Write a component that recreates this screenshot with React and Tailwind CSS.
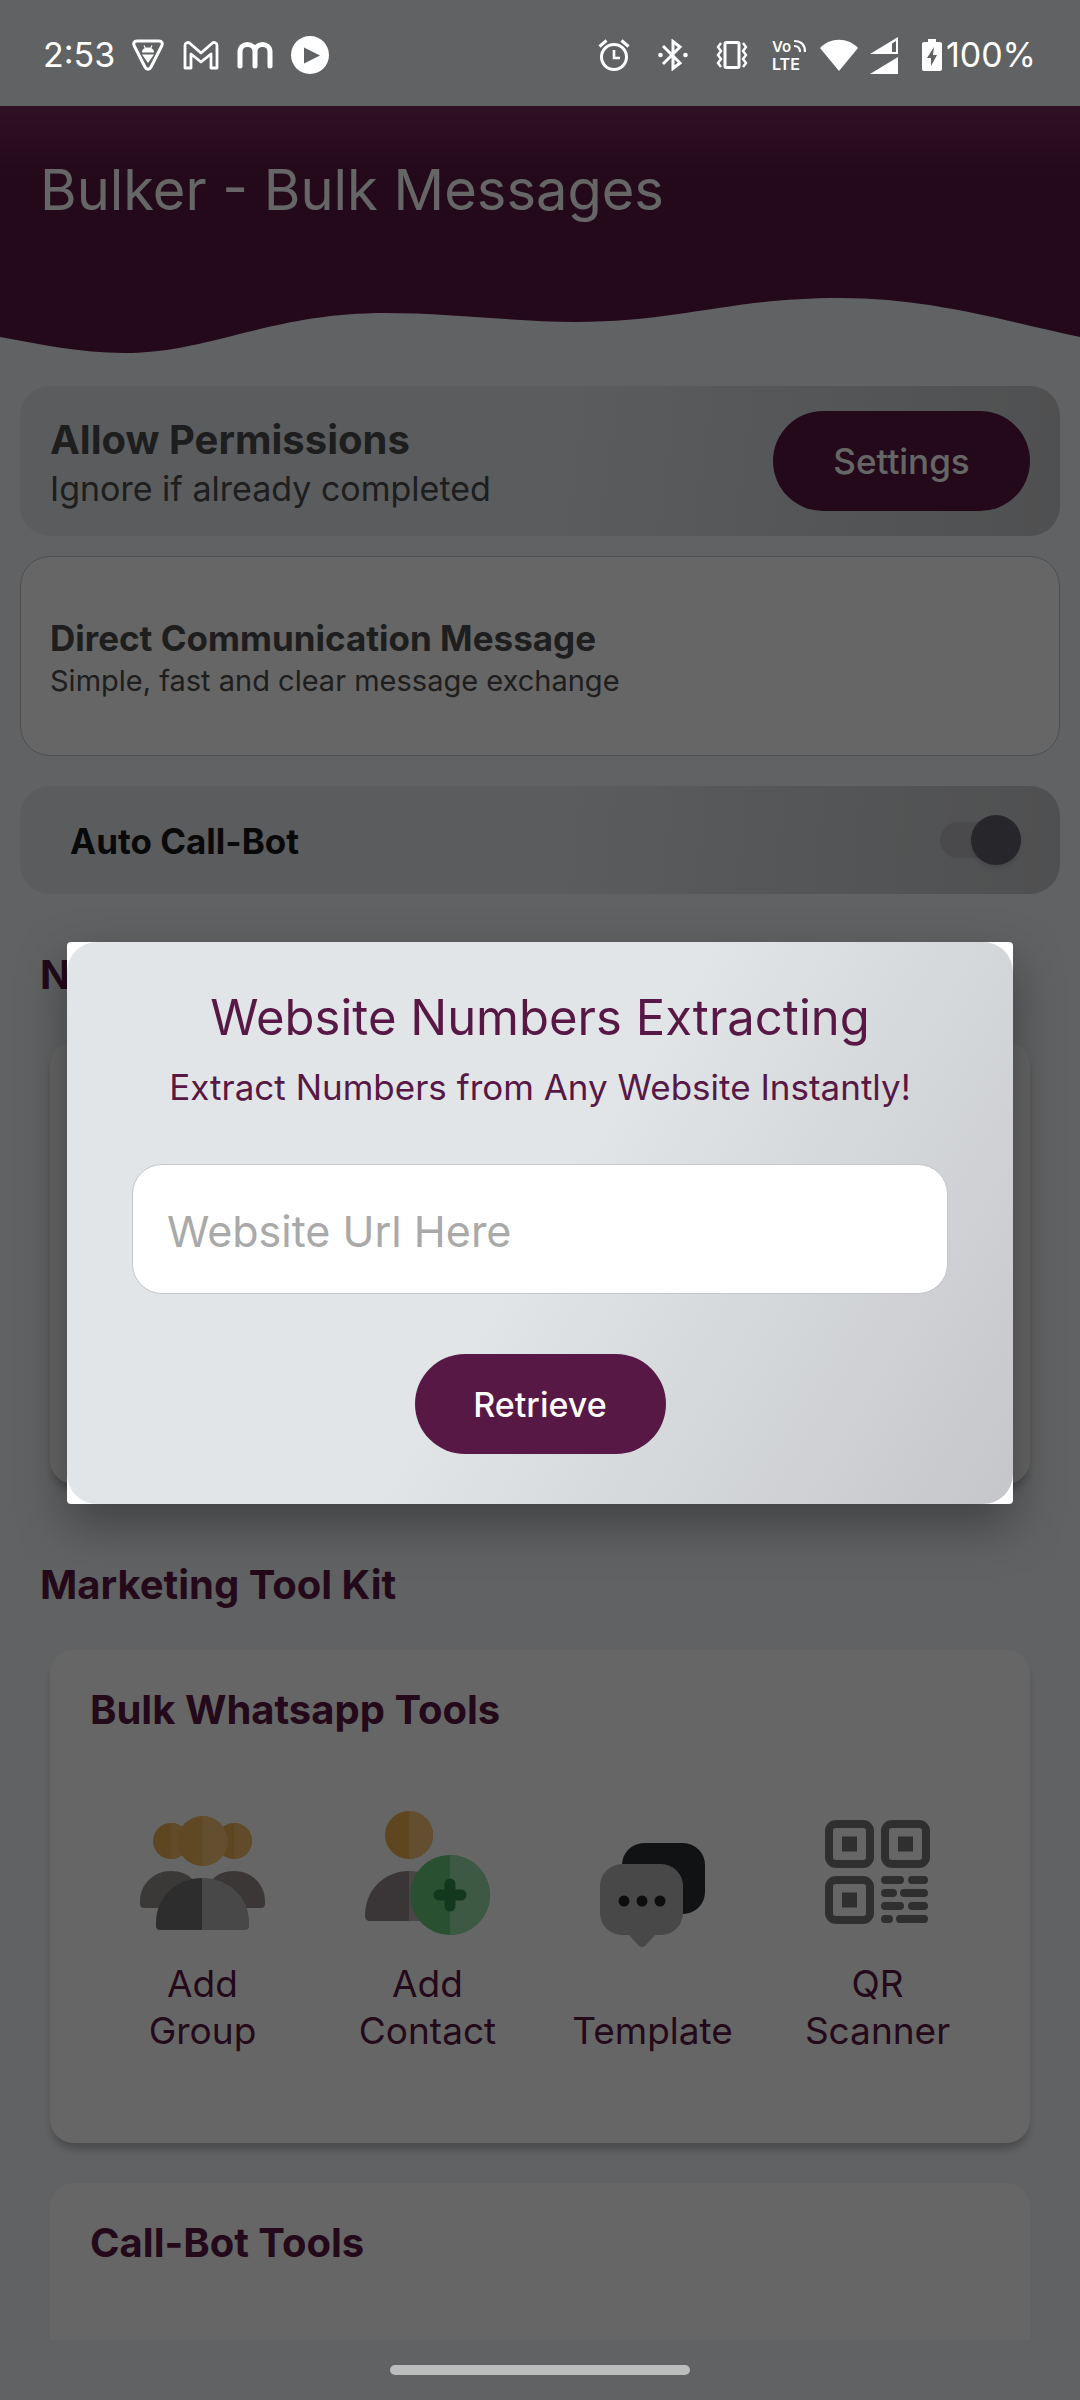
import React, { useState } from 'react';

const DebugIcon = () => (
  <svg width="34" height="34" viewBox="0 0 34 34" fill="none">
    <path d="M6 3h22c3 0 4 2.500 2.800 4.800L20 29c-1.500 3-4.500 3-6 0L3.200 7.800C2 5.500 3 3 6 3z" stroke="#fff" strokeWidth="3" strokeLinejoin="round" />
    <path d="M11 14.500c0-3.500 2.500-5 6-5s6 1.500 6 5zM11 16.500h12l-6 8.500z" fill="#fff" />
    <path d="M13 7.500l1.500 3M21 7.500l-1.500 3" stroke="#fff" strokeWidth="1.200" />
  </svg>
);

const MailIcon = () => (
  <svg width="36" height="29" viewBox="0 0 36 29" fill="none" stroke="#fff" strokeWidth="2.800" strokeLinejoin="round">
    <path d="M2 4.500C2 1.500 5 1 6.500 2L18 12 29.500 2C31 1 34 1.500 34 4.500V27h-6V13l-10 8L8 13v14H2z" />
  </svg>
);

const MIcon = () => (
  <svg width="36" height="28" viewBox="0 0 36 28" fill="none" stroke="#fff" strokeWidth="5" strokeLinecap="round">
    <path d="M3 25V11c0-10 15-10 15 0v14M18 11c0-10 15-10 15 0v14" />
  </svg>
);

const PlayIcon = () => (
  <svg width="38" height="38" viewBox="0 0 38 38">
    <circle cx="19" cy="19" r="19" fill="#fff" />
    <path d="M13 11.500v16L29 19.500z" fill="#616264" />
  </svg>
);

const AlarmIcon = () => (
  <svg width="32" height="32" viewBox="0 0 32 32" fill="none" stroke="#fff" strokeWidth="3">
    <circle cx="16" cy="18" r="12.500" />
    <path d="M16 11v8h6" strokeWidth="2.600" />
    <path d="M1.500 7.500l7-6M30.500 7.500l-7-6" />
  </svg>
);

const BluetoothIcon = () => (
  <svg width="30" height="32" viewBox="0 0 30 32" fill="none" stroke="#fff" strokeWidth="3">
    <path d="M5 7l17 17-7 5.500V2.500L22 8 5 25" />
    <circle cx="2.500" cy="16" r="2.300" fill="#fff" stroke="none" />
    <circle cx="27.500" cy="16" r="2.300" fill="#fff" stroke="none" />
  </svg>
);

const VibrateIcon = () => (
  <svg width="32" height="28" viewBox="0 0 32 28" fill="none" stroke="#fff" strokeWidth="3">
    <rect x="9" y="1.500" width="14" height="25" rx="1.500" />
    <path d="M5 2L2 6l3 4-3 4 3 4-3 4 3 4M27 2l3 4-3 4 3 4-3 4 3 4-3 4" strokeWidth="2.400" />
  </svg>
);

const VolteIcon = () => (
  <svg width="36" height="44" viewBox="0 -6 36 44" fill="#fff" fontFamily="Inter, sans-serif" fontWeight="600">
    <text x="0" y="13" fontSize="15">Vo</text>
    <text x="0" y="31" fontSize="16">LTE</text>
    <path d="M22 2c7 0 11 4 11 11M22 7c4 0 6 2 6 6" fill="none" stroke="#fff" strokeWidth="2.200" />
  </svg>
);

const WifiIcon = () => (
  <svg width="38" height="32" viewBox="0 0 38 32">
    <path d="M0 9C10-2 28-2 38 9L19 32z" fill="#fff" />
  </svg>
);

const SignalIcon = () => (
  <svg width="28" height="37" viewBox="0 0 28 37" fill="#fff">
    <path fillRule="evenodd" d="M0 17L28 0v17zM22 6.500v8.500h4V4z" />
    <path d="M0 37l28-17v17z" />
  </svg>
);

const BatteryIcon = () => (
  <svg width="20" height="32" viewBox="0 0 20 32">
    <path d="M6 0h8v3h4c1.200 0 2 .8 2 2v25c0 1.200-.8 2-2 2H2c-1.200 0-2-.8-2-2V5c0-1.200.8-2 2-2h4z" fill="#fff" />
    <path d="M12 8L5 19h4v8l6-11h-4z" fill="#616264" />
  </svg>
);

const GroupIcon = () => (
  <svg width="125" height="125" viewBox="0 0 125 125">
    <circle cx="31" cy="31" r="18" fill="#eeb056" />
    <path d="M31 13a18 18 0 0 1 0 36z" fill="#f6bc6c" />
    <circle cx="94" cy="31" r="18" fill="#eeb056" />
    <path d="M94 13a18 18 0 0 1 0 36z" fill="#f6bc6c" />
    <path d="M31 61c18 0 31 13 31 32v5H4c-2.500 0-4-1.500-4-4v-3c0-17 14-30 31-30z" fill="#938d8d" />
    <path d="M94 61c-18 0-31 13-31 32v5h58c2.500 0 4-1.500 4-4v-3c0-17-14-30-31-30z" fill="#938a8a" />
    <circle cx="62.500" cy="31" r="25" fill="#f0b45c" />
    <path d="M62.500 6a25 25 0 0 1 0 50z" fill="#fac478" />
    <path d="M62.500 68v52H20c-2.500 0-4-1.500-4-4v-4c0-25 21-44 46.500-44z" fill="#727272" />
    <path d="M62.500 68v52H105c2.500 0 4-1.500 4-4v-4c0-25-21-44-46.500-44z" fill="#b4b4b4" />
  </svg>
);

const ContactIcon = () => (
  <svg width="125" height="125" viewBox="0 0 125 125">
    <circle cx="44" cy="25" r="24" fill="#f0b050" />
    <path d="M44 1a24 24 0 0 1 0 48z" fill="#fac478" />
    <path d="M44 61v50H5c-3 0-5-2-5-5 0-26 19-45 44-45z" fill="#918889" />
    <path d="M44 61c14 0 26 6 34 15v35H44z" fill="#b8b0b1" />
    <circle cx="85" cy="85" r="40" fill="#64c87c" />
    <path d="M85 45a40 40 0 0 1 0 80z" fill="#98dca8" />
    <path d="M85 74v22M74 85h22" stroke="#348c4a" strokeWidth="11" strokeLinecap="round" />
  </svg>
);

const TemplateIcon = () => (
  <svg width="105" height="105" viewBox="0 0 105 105">
    <rect x="22" y="0" width="83" height="71" rx="22" fill="#2a2e30" />
    <path d="M22 21h39a22 22 0 0 1 22 22v27a22 22 0 0 1-22 22h-6L45 103q-3 2-6 0L29 92h-7A22 22 0 0 1 0 70V43a22 22 0 0 1 22-22z" fill="#b4b4b4" />
    <circle cx="24" cy="58" r="5.500" fill="#222" />
    <circle cx="42" cy="58" r="5.500" fill="#222" />
    <circle cx="60" cy="58" r="5.500" fill="#222" />
  </svg>
);

const QrIcon = () => (
  <svg width="105" height="105" viewBox="0 0 105 105" fill="none" stroke="#767676" strokeWidth="8">
    <rect x="4" y="4" width="41" height="40" rx="7" />
    <rect x="60" y="4" width="41" height="40" rx="7" />
    <rect x="4" y="60" width="41" height="40" rx="7" />
    <path d="M17 24h15M73 24h15M17 80h15" strokeWidth="15" />
    <path d="M60 60h15M87 60h12M60 73h8M79 73h20M60 86h15M87 86h12M60 99h4M75 99h24" strokeLinecap="round" />
  </svg>
);

const tools = [
  { label: ['Add', 'Group'], Icon: GroupIcon },
  { label: ['Add', 'Contact'], Icon: ContactIcon },
  { label: ['Template'], Icon: TemplateIcon },
  { label: ['QR', 'Scanner'], Icon: QrIcon },
];

const StatusBar = () => (
  <div className="relative z-20 flex h-[106px] items-center justify-between pl-[43px] pr-[44px] pt-1 text-[34px] leading-10 text-white">
    <div className="flex items-center">
      <span className="mr-4">2:53</span>
      <span className="flex items-center gap-[18px]">
        <DebugIcon />
        <MailIcon />
        <MIcon />
        <PlayIcon />
      </span>
    </div>
    <div className="flex items-center">
      <span className="mr-3 flex items-center gap-[28px]">
        <AlarmIcon />
        <BluetoothIcon />
        <VibrateIcon />
      </span>
      <span className="mr-6 ml-3 flex items-center gap-3">
        <VolteIcon />
        <WifiIcon />
        <SignalIcon />
      </span>
      <BatteryIcon />
      <span className="ml-1">100%</span>
    </div>
  </div>
);

const Header = () => (
  <header>
    <div className="h-[192px] bg-[#581842] bg-linear-to-b from-[#772a59] to-[#581842] to-[72px] px-[40px] pt-[48px]">
      <h1 className="text-[56px] leading-[72px] text-white">Bulker - Bulk Messages</h1>
    </div>
    <svg className="block h-[55px] w-full" viewBox="0 0 1080 55" preserveAspectRatio="none">
      <path d="M0 39C40 46 80 55 124 55C210 55 270 15 385 15C450 15 520 24 575 24C680 24 730 0 840 0C930 0 1000 22 1080 39V0H0z" fill="#581842" />
    </svg>
  </header>
);

const App = () => {
  const [autoCall, setAutoCall] = useState(true);
  const [url, setUrl] = useState('');

  return (
    <div className="relative flex h-screen flex-col overflow-hidden bg-[#f3f5f8] font-['Inter',sans-serif]">
      <StatusBar />

      <main className="flex min-h-0 flex-1 flex-col overflow-hidden">
        <Header />

        <section className="mx-5 mt-[33px] flex h-[150px] shrink-0 items-center justify-between rounded-[30px] bg-linear-[98deg] from-[#e4e7ea] via-[#e4e7ea] to-[#c5c7c9] px-[30px]">
          <div className="pt-1.5 text-[#4b4b4d]">
            <h2 className="text-[40px] font-bold leading-[50px]">Allow Permissions</h2>
            <p className="text-[34px] leading-[48px]">Ignore if already completed</p>
          </div>
          <button className="h-[100px] w-[257px] rounded-full bg-[#581842] text-[35px] font-medium text-white">Settings</button>
        </section>

        <section className="mx-5 mt-5 flex h-[200px] shrink-0 flex-col justify-center rounded-[30px] border border-[#c0c4c8] bg-white px-[29px] pt-1 text-[#4b4b4d]">
          <h2 className="text-[35px] font-bold leading-[46px]">Direct Communication Message</h2>
          <p className="text-[29px] leading-[40px]">Simple, fast and clear message exchange</p>
        </section>

        <label className="mx-5 mt-[30px] flex h-[108px] shrink-0 items-center justify-between rounded-[30px] bg-linear-[96deg] from-[#e4e7ea] via-[#e4e7ea] to-[#c5c7c9] pl-[50px] pr-[39px]">
          <span className="pt-0.5 text-[35px] font-bold text-[#18181a]">Auto Call-Bot</span>
          <input
            type="checkbox"
            checked={autoCall}
            onChange={(e) => setAutoCall(e.target.checked)}
            className="flex h-9 w-[81px] appearance-none items-center rounded-full bg-[#b9b9be] before:size-[50px] before:shrink-0 before:rounded-full before:bg-[#62606c] before:shadow-md before:content-[''] checked:justify-end"
          />
        </label>

        <h2 className="mt-[57px] px-[40px] text-[40px] font-bold leading-[48px] text-[#581842]">Numbers</h2>
        <section className="mx-[50px] mt-[43px] h-[442px] shrink-0 rounded-[24px] bg-white shadow-[0_8px_8px_-2px_rgba(0,0,0,0.25)]" />

        <h2 className="mt-[77px] px-[40px] text-[40px] font-bold leading-[48px] text-[#581842]">Marketing Tool Kit</h2>
        <section className="mx-[50px] mt-[41px] h-[493px] shrink-0 rounded-[24px] bg-white px-[40px] pt-[36px] shadow-[0_8px_8px_-2px_rgba(0,0,0,0.25)]">
          <h3 className="text-[40px] font-bold leading-[48px] text-[#581842]">Bulk Whatsapp Tools</h3>
          <div className="mt-[50px] grid grid-cols-4">
            {tools.map(({ label, Icon }) => (
              <button key={label.join(' ')} className="flex flex-col items-center text-[37px] leading-[47px] text-[#581842]">
                <span className="flex min-h-[176px] flex-1 items-center">
                  <Icon />
                </span>
                {label.map((line) => (
                  <span key={line}>{line}</span>
                ))}
              </button>
            ))}
          </div>
        </section>

        <section className="mx-[50px] mt-10 h-[493px] shrink-0 rounded-[24px] bg-white px-[40px] pt-[36px]">
          <h3 className="text-[40px] font-bold leading-[48px] text-[#581842]">Call-Bot Tools</h3>
        </section>
      </main>

      <nav className="relative z-20 flex h-[60px] items-center justify-center">
        <span className="h-[10px] w-[300px] rounded-full bg-[#bbbcbc]" />
      </nav>

      {/* scrim and dialog */}
      <div className="absolute inset-0 z-10 flex items-center justify-center bg-black/60 px-[67px] pb-[60px] pt-[106px]">
        <div role="dialog" aria-labelledby="dialog-title" className="w-full overflow-hidden rounded bg-white shadow-[0_20px_50px_rgba(0,0,0,0.35)]">
          <form
            onSubmit={(e) => e.preventDefault()}
            className="flex flex-col items-center rounded-[30px] bg-linear-[121deg] from-[#e1e5e8] via-[#e1e5e8] to-[#c5c6c9] px-[65px] pb-[50px] pt-[46px] text-[#581845]"
          >
            <h2 id="dialog-title" className="text-[49px] leading-[60px]">Website Numbers Extracting</h2>
            <p className="mt-4 text-[35px] leading-[46px]">Extract Numbers from Any Website Instantly!</p>
            <input
              type="text"
              aria-label="Website Url"
              placeholder="Website Url Here"
              value={url}
              onChange={(e) => setUrl(e.target.value)}
              className="mt-[54px] h-[130px] w-full rounded-[30px] border border-[#c4c6c8] bg-white px-[34px] pt-1 text-[43px] outline-none placeholder:text-[#a9a9a9]"
            />
            <button type="submit" className="mt-[60px] h-[100px] w-[251px] rounded-full bg-[#581845] text-[34px] font-medium text-white">Retrieve</button>
          </form>
        </div>
      </div>
    </div>
  );
};

export default App;
